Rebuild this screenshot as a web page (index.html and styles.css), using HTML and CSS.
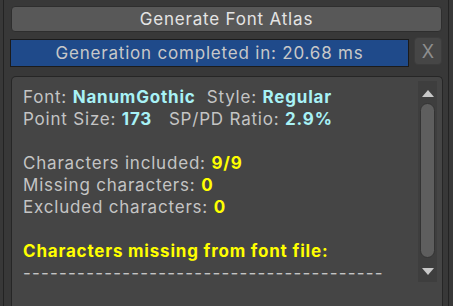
FILE: index.html
```html
<!DOCTYPE html>
<html lang="en">

<head>
    <meta charset="UTF-8">
    <meta name="viewport" content="width=device-width, initial-scale=1.0">
    <title>Font Atlas</title>
    <link rel="stylesheet" href="styles.css">
</head>

<body>
    <div class="inspector">
        <button class="generate-btn" type="button">Generate Font Atlas</button>

        <div class="status-row">
            <div class="status-bar">Generation completed in: 20.68 ms</div>
            <button class="close-btn" type="button">X</button>
        </div>

        <div class="report">
            <div class="report-text">
                <div class="line">Font: <b class="cyan">NanumGothic</b>&nbsp; Style: <b class="cyan">Regular</b></div>
                <div class="line">Point Size: <b class="cyan">173</b>&nbsp;&nbsp; SP/PD Ratio: <b class="cyan">2.9%</b></div>
                <div class="line">&nbsp;</div>
                <div class="line">Characters included: <b class="yellow">9/9</b></div>
                <div class="line">Missing characters: <b class="yellow">0</b></div>
                <div class="line">Excluded characters: <b class="yellow">0</b></div>
                <div class="line">&nbsp;</div>
                <div class="line"><b class="yellow">Characters missing from font file:</b></div>
                <div class="line dashes">----------------------------------------</div>
            </div>

            <div class="scrollbar">
                <div class="arrow up"></div>
                <div class="thumb"></div>
                <div class="arrow down"></div>
            </div>
        </div>
    </div>
</body>

</html>
```

FILE: styles.css
```css
body {
    margin: 0;
    background-color: #383838;
    font-family: Inter, "Noto Sans", sans-serif;
    font-size: 17px;
    letter-spacing: 0.8px;
    overflow: hidden;
}

.inspector {
    margin-left: 3px;
    width: 446px;
    height: 306px;
    border-left: 1px solid #232323;
    border-right: 1px solid #232323;
    padding: 6px 5px 0 6px;
    box-sizing: border-box;
}

.generate-btn {
    display: block;
    width: 431px;
    height: 26px;
    margin-left: 1px;
    background-color: #585858;
    color: #e4e4e4;
    border: 1px solid #2e2e2e;
    border-radius: 4px;
    font-family: inherit;
    font-size: 17px;
    letter-spacing: 0.8px;
    padding: 0;
}

.status-row {
    display: flex;
    align-items: flex-start;
    gap: 5px;
    margin-top: 5px;
}

.status-bar {
    width: 399px;
    height: 28px;
    margin-top: 2px;
    background-color: #1f4a8a;
    border: 1px solid #1b1b1b;
    box-sizing: border-box;
    color: #c8c8c8;
    line-height: 26px;
    text-align: center;
}

.close-btn {
    width: 28px;
    height: 28px;
    background-color: #464646;
    border: 1px solid #3c3c3c;
    border-radius: 4px;
    color: #8e8e8e;
    font-family: inherit;
    font-size: 18px;
    padding: 0;
}

.report {
    display: flex;
    align-items: flex-start;
    margin-top: 9px;
    margin-left: 1px;
    width: 432px;
    height: 240px;
    background-color: #454545;
    border: 1px solid #262626;
    border-bottom: none;
    border-radius: 5px 5px 0 0;
    box-sizing: border-box;
    padding: 4px 5px 0 11px;
}

.report-text {
    flex: 1;
    padding-top: 5px;
    color: #c4c4c4;
    line-height: 22px;
    white-space: nowrap;
}

.dashes {
    letter-spacing: 1.2px;
}

.cyan {
    color: #a8f2f6;
}

.yellow {
    color: #ffff00;
}

.scrollbar {
    display: flex;
    flex-direction: column;
    align-items: center;
    width: 19px;
    height: 201px;
    background-color: #3e3e3e;
}

.thumb {
    width: 15px;
    flex: 1;
    margin: 6px 0 10px;
    background-color: #5e5e5e;
    border: 1px solid #333;
    border-radius: 8px;
    box-sizing: border-box;
}

.arrow {
    width: 0;
    height: 0;
    border-left: 6px solid transparent;
    border-right: 6px solid transparent;
}

.arrow.up {
    margin-top: 9px;
    border-bottom: 7px solid #c8c8c8;
}

.arrow.down {
    margin-bottom: 7px;
    border-top: 7px solid #c8c8c8;
}
```
